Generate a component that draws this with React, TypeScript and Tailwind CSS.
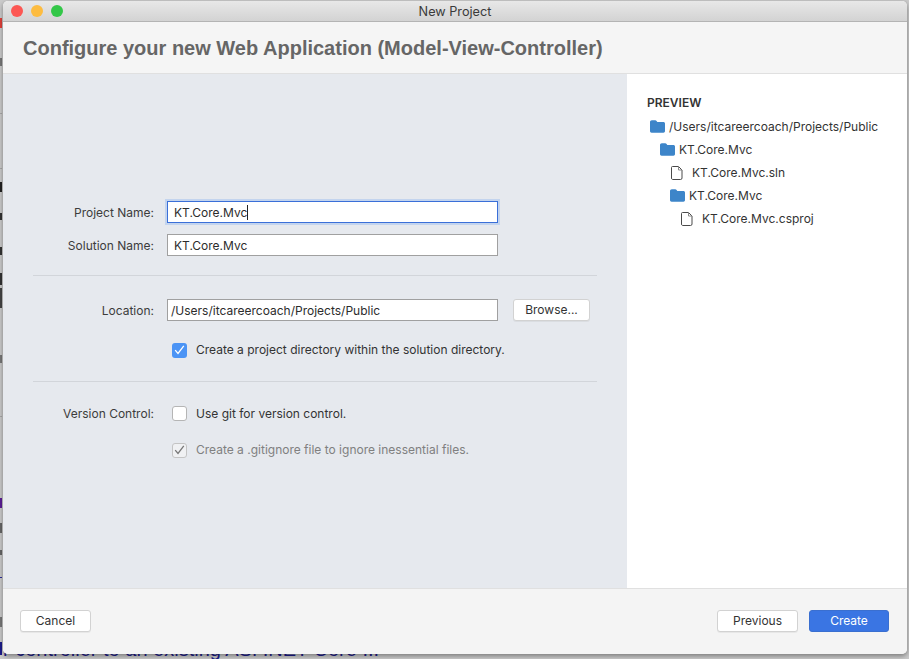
const UI_FONT = "font-['Inter','Noto_Sans',sans-serif]";

// bits of the page behind the dialog that peek out along the edges
const LEFT_BITS = [
  { top: 18, height: 10, color: "#e0413a" },
  { top: 58, height: 8, color: "#777777" },
  { top: 113, height: 1, color: "#a8a8a8" },
  { top: 168, height: 1, color: "#a8a8a8" },
  { top: 182, height: 10, color: "#222222" },
  { top: 213, height: 7, color: "#333333" },
  { top: 247, height: 8, color: "#333333" },
  { top: 273, height: 12, color: "#333333" },
  { top: 288, height: 20, color: "#444444" },
  { top: 355, height: 8, color: "#777777" },
  { top: 416, height: 1, color: "#a8a8a8" },
  { top: 498, height: 10, color: "#5a1d96" },
  { top: 523, height: 10, color: "#666666" },
  { top: 550, height: 5, color: "#666666" },
  { top: 577, height: 1, color: "#2b2b9c" },
  { top: 617, height: 10, color: "#777777" },
  { top: 642, height: 13, color: "#1c1c8c" },
];

function FolderIcon() {
  return (
    <svg width="15" height="13" viewBox="0 0 15 13" className="shrink-0">
      <path d="M0 2.2C0 1 .8.3 1.8.3h3.4c.7 0 1 .3 1.4.8l.7.9h6.1c.9 0 1.6.7 1.6 1.6v7.5c0 .9-.7 1.6-1.6 1.6H1.6C.7 12.7 0 12 0 11.100z" fill="#3d85c9" />
    </svg>
  );
}

function FileIcon() {
  return (
    <svg width="12" height="14" viewBox="0 0 12 14" className="shrink-0" fill="none" stroke="#4a4a4a" strokeWidth="1">
      <path d="M1.500.5h6l3.500 3.500v8a1.500 1.500 0 0 1-1.500 1.500h-8A1.500 1.500 0 0 1 .5 12V1.500a1 1 0 0 1 1-1z" />
      <path d="M7.500.5V4H11" stroke="#8a8a8a" />
    </svg>
  );
}

function CheckMark({ color }: { color: string }) {
  return (
    <svg width="11" height="10" viewBox="0 0 11 10" fill="none" stroke={color} strokeWidth="1.300">
      <path d="M1.200 5.200 4 8.500 9.800.8" />
    </svg>
  );
}

function Row({ label, children }: { label?: string; children: React.ReactNode }) {
  return (
    <div className="flex items-center">
      <div className="w-[121px] text-right text-[#3c3c3c] shrink-0 pt-px">{label}</div>
      <div className="ml-[13px] flex items-center">{children}</div>
    </div>
  );
}

function Field({ value, focused, path }: { value: string; focused?: boolean; path?: boolean }) {
  return (
    <div
      className={`w-[331px] h-[22px] pt-px bg-white flex items-center text-[#2c2c2c] ${path ? "pl-[3px]" : "pl-[6px]"} ${
        focused
          ? "border border-[#3a6fd8] shadow-[0_0_0_2px_rgba(90,150,240,0.25)]"
          : "border border-[#a0a0a0]"
      }`}
    >
      {value}
      {focused && <span className="w-px h-[15px] bg-[#222]" />}
    </div>
  );
}

function CheckRow({ text, state }: { text: string; state: "on" | "off" | "muted" }) {
  return (
    <div className="flex items-center ml-[5px]">
      {state === "on" && (
        <div className="w-[15px] h-[15px] rounded-[3px] bg-[#4b94f5] flex items-center justify-center">
          <CheckMark color="#ffffff" />
        </div>
      )}
      {state === "off" && <div className="w-[15px] h-[15px] rounded-[3px] bg-white border border-[#b5b5b5]" />}
      {state === "muted" && (
        <div className="w-[15px] h-[15px] rounded-[3px] bg-[#f0f1f3] border border-[#c4c4c4] flex items-center justify-center">
          <CheckMark color="#777777" />
        </div>
      )}
      <span className={`ml-[9px] ${state === "muted" ? "text-[#808080]" : "text-[#333]"}`}>{text}</span>
    </div>
  );
}

function Button({ children, width, primary }: { children: React.ReactNode; width: string; primary?: boolean }) {
  return (
    <div
      className={`${width} h-[22px] rounded-[3px] flex items-center justify-center ${
        primary
          ? "bg-[#3a75e3] text-white border border-[#3a6fd0]"
          : "bg-white text-[#333] border border-[#d2d2d2] shadow-[0_1px_0_rgba(0,0,0,0.05)]"
      }`}
    >
      {children}
    </div>
  );
}

const TREE = [
  { name: "/Users/itcareercoach/Projects/Public", indent: "pl-[3px]", icon: "folder" },
  { name: "KT.Core.Mvc", indent: "pl-[13px]", icon: "folder" },
  { name: "KT.Core.Mvc.sln", indent: "pl-[24px]", icon: "file" },
  { name: "KT.Core.Mvc", indent: "pl-[23px]", icon: "folder" },
  { name: "KT.Core.Mvc.csproj", indent: "pl-[34px]", icon: "file" },
];

export default function App() {
  return (
    <div className={`relative w-[909px] h-[659px] overflow-hidden bg-[#cacaca] text-[12px] ${UI_FONT}`}>
      {/* page behind the dialog */}
      <div className="absolute left-[3px] top-[638px] whitespace-nowrap text-[20px] leading-[23px] text-[#1c1c8c] font-['Liberation_Sans',sans-serif]">
        r controller to an existing ASP.NET Core ...
      </div>
      {LEFT_BITS.map((bit) => (
        <div
          key={bit.top}
          className="absolute left-0 w-[2px]"
          style={{ top: bit.top, height: bit.height, backgroundColor: bit.color }}
        />
      ))}

      {/* dialog window */}
      <div className="absolute left-[3px] top-px w-[904px] h-[653px] flex flex-col rounded-[5px] overflow-hidden bg-[#f4f4f4] shadow-[0_2px_5px_rgba(0,0,0,0.4)]">
        <div className="relative h-[21px] pt-[2px] shrink-0 bg-gradient-to-b from-[#e8e8e8] to-[#d3d3d3] border-b border-[#b4b4b4] flex items-center justify-center text-[12.700px] text-[#3a3a3a]">
          <div className="absolute left-[8px] top-[4px] flex gap-[8px]">
            <span className="w-[12px] h-[12px] rounded-full bg-[#fc5753]" />
            <span className="w-[12px] h-[12px] rounded-full bg-[#fdbc40]" />
            <span className="w-[12px] h-[12px] rounded-full bg-[#33c748]" />
          </div>
          New Project
        </div>

        <div className="h-[52px] shrink-0 flex items-center pl-[20px] border-b border-[#e0e0e0] bg-[#f5f5f5]">
          <h1 className="text-[20px] font-bold text-[#666666] font-['Liberation_Sans',sans-serif]">
            Configure your new Web Application (Model-View-Controller)
          </h1>
        </div>

        <div className="flex flex-1 min-h-0">
          <div className="w-[624px] shrink-0 bg-[#e6e9ee] pt-[127px]">
            <div className="pl-[30px] w-[594px] flex flex-col">
              <div className="flex flex-col gap-[11px]">
                <Row label="Project Name:">
                  <Field value="KT.Core.Mvc" focused />
                </Row>
                <Row label="Solution Name:">
                  <Field value="KT.Core.Mvc" />
                </Row>
              </div>
              <div className="h-px bg-[#d2d5da] mt-[19px] w-[564px]" />
              <div className="mt-[23px]">
                <Row label="Location:">
                  <Field value="/Users/itcareercoach/Projects/Public" path />
                  <div className="ml-[15px]">
                    <Button width="w-[77px]">Browse...</Button>
                  </div>
                </Row>
              </div>
              <div className="mt-[20px]">
                <Row>
                  <CheckRow text="Create a project directory within the solution directory." state="on" />
                </Row>
              </div>
              <div className="h-px bg-[#d2d5da] mt-[22px] w-[564px]" />
              <div className="mt-[22px]">
                <Row label="Version Control:">
                  <CheckRow text="Use git for version control." state="off" />
                </Row>
              </div>
              <div className="mt-[18px]">
                <Row>
                  <CheckRow text="Create a .gitignore file to ignore inessential files." state="muted" />
                </Row>
              </div>
            </div>
          </div>

          <div className="flex-1 bg-white pl-[20px] pt-[22px]">
            <div className="text-[12px] font-semibold text-[#333] leading-[14px]">PREVIEW</div>
            <div className="mt-[5px] flex flex-col">
              {TREE.map((node, i) => (
                <div key={i} className={`h-[23px] flex items-center text-[#333] ${node.indent}`}>
                  {node.icon === "folder" ? <FolderIcon /> : <FileIcon />}
                  <span className={node.icon === "folder" ? "ml-[4px]" : "ml-[9px]"}>{node.name}</span>
                </div>
              ))}
            </div>
          </div>
        </div>

        <div className="h-[66px] shrink-0 bg-[#f4f4f4] border-t border-[#e0e0e0] flex items-center justify-between px-[17px] pb-[2px]">
          <Button width="w-[71px]">Cancel</Button>
          <div className="flex gap-[11px] pr-[1px]">
            <Button width="w-[81px]">Previous</Button>
            <Button width="w-[80px]" primary>
              Create
            </Button>
          </div>
        </div>
      </div>
    </div>
  );
}
